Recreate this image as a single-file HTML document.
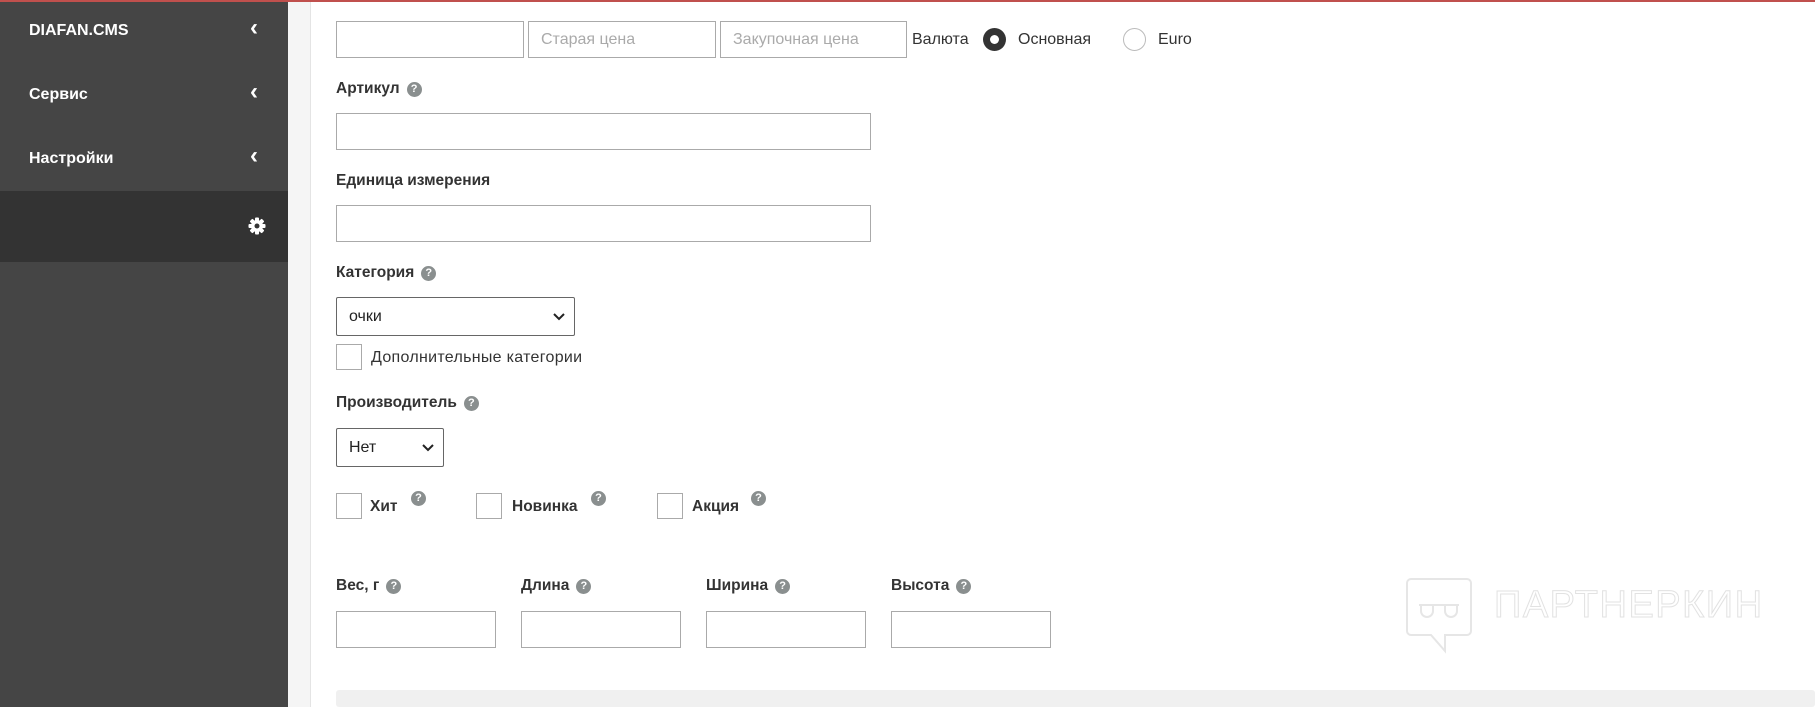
<!DOCTYPE html>
<html><head><meta charset="utf-8"><style>
*{box-sizing:border-box;margin:0;padding:0}
body{width:1815px;height:707px;overflow:hidden;background:#fff;font-family:"Liberation Sans",sans-serif;position:relative;color:#333}
.a{position:absolute}
.side{left:0;top:0;width:288px;height:707px;background:#454545}
.nav{color:#fff;font-weight:bold;font-size:16px;left:29px}
.chev{color:#fff;font-size:24px;left:250px;font-weight:bold}
.strip{left:288px;top:0;width:23px;height:707px;background:#f5f5f5;border-right:1px solid #e4e4e4}
.top{left:0;top:0;width:1815px;height:2px;background:#c0504d}
.in{border:1px solid #aaa;background:#fff;height:37px}
.lbl{font-size:15.5px;color:#333;font-weight:bold}
.q{display:inline-block;width:15px;height:15px;border-radius:50%;background:#8a8f8f;color:#fff;font-size:11px;font-weight:bold;text-align:center;line-height:15px;vertical-align:1px;margin-left:7px}
.ph{color:#aaa;font-size:16px;padding:9px 12px}
.cb{width:26px;height:26px;border:1px solid #aaa;background:#fff}
.sel{border:1px solid #666;border-radius:2px;background:#fff;font-size:16px;padding:10px 12px;color:#222}
.sel svg{position:absolute;right:9px;top:15px}
</style></head><body>
<div class="a side"></div>
<div class="a" style="left:0;top:191px;width:288px;height:71px;background:#333"></div>
<div class="a nav" style="top:22px">DIAFAN.CMS</div><div class="a chev" style="top:14px">‹</div>
<div class="a nav" style="top:86px">Сервис</div><div class="a chev" style="top:78px">‹</div>
<div class="a nav" style="top:150px">Настройки</div><div class="a chev" style="top:142px">‹</div>
<svg class="a" style="left:248px;top:217px" width="18" height="18" viewBox="0 0 18 18"><g fill="#fff"><circle cx="9" cy="9" r="6"/><rect x="7" y="0.5" width="4" height="17" rx="1"/><rect x="0.5" y="7" width="17" height="4" rx="1"/><rect x="7" y="0.5" width="4" height="17" rx="1" transform="rotate(45 9 9)"/><rect x="7" y="0.5" width="4" height="17" rx="1" transform="rotate(-45 9 9)"/></g><circle cx="9" cy="9" r="2.5" fill="#333"/></svg>
<div class="a strip"></div>
<div class="a top"></div>

<div class="a in" style="left:336px;top:21px;width:188px"></div>
<div class="a in ph" style="left:528px;top:21px;width:188px">Старая цена</div>
<div class="a in ph" style="left:720px;top:21px;width:187px">Закупочная цена</div>
<div class="a" style="left:912px;top:31px;font-size:16px">Валюта</div>
<div class="a" style="left:983px;top:28px;width:23px;height:23px;border-radius:50%;background:#333"><div style="margin:7px;width:9px;height:9px;border-radius:50%;background:#fff"></div></div>
<div class="a" style="left:1018px;top:31px;font-size:16px">Основная</div>
<div class="a" style="left:1123px;top:28px;width:23px;height:23px;border-radius:50%;border:1px solid #bbb"></div>
<div class="a" style="left:1158px;top:31px;font-size:16px">Euro</div>

<div class="a lbl" style="left:336px;top:80px">Артикул<span class="q">?</span></div>
<div class="a in" style="left:336px;top:113px;width:535px"></div>
<div class="a lbl" style="left:336px;top:172px">Единица измерения</div>
<div class="a in" style="left:336px;top:205px;width:535px"></div>
<div class="a lbl" style="left:336px;top:264px">Категория<span class="q">?</span></div>
<div class="a sel" style="left:336px;top:297px;width:239px;height:39px">очки<svg width="12" height="8"><path d="M1 1l5 5 5-5" stroke="#222" stroke-width="2" fill="none"/></svg></div>
<div class="a cb" style="left:336px;top:344px"></div>
<div class="a" style="left:371px;top:349px;font-size:16px;letter-spacing:0.3px">Дополнительные категории</div>
<div class="a lbl" style="left:336px;top:394px">Производитель<span class="q">?</span></div>
<div class="a sel" style="left:336px;top:428px;width:108px;height:39px">Нет<svg width="12" height="8"><path d="M1 1l5 5 5-5" stroke="#222" stroke-width="2" fill="none"/></svg></div>

<div class="a cb" style="left:336px;top:493px"></div><div class="a lbl" style="left:370px;top:498px">Хит</div><span class="a q" style="left:411px;top:491px;margin:0">?</span>
<div class="a cb" style="left:476px;top:493px"></div><div class="a lbl" style="left:512px;top:498px">Новинка</div><span class="a q" style="left:591px;top:491px;margin:0">?</span>
<div class="a cb" style="left:657px;top:493px"></div><div class="a lbl" style="left:692px;top:498px">Акция</div><span class="a q" style="left:751px;top:491px;margin:0">?</span>

<div class="a lbl" style="left:336px;top:577px">Вес, г<span class="q">?</span></div>
<div class="a lbl" style="left:521px;top:577px">Длина<span class="q">?</span></div>
<div class="a lbl" style="left:706px;top:577px">Ширина<span class="q">?</span></div>
<div class="a lbl" style="left:891px;top:577px">Высота<span class="q">?</span></div>
<div class="a in" style="left:336px;top:611px;width:160px"></div>
<div class="a in" style="left:521px;top:611px;width:160px"></div>
<div class="a in" style="left:706px;top:611px;width:160px"></div>
<div class="a in" style="left:891px;top:611px;width:160px"></div>

<div class="a" style="left:336px;top:690px;width:1479px;height:17px;background:#f0f0f0;border-radius:3px"></div>
<svg class="a" style="left:1405px;top:577px" width="70" height="78" fill="none" stroke="#e6e6e6" stroke-width="2"><path d="M6 2h56a4 4 0 0 1 4 4v48a4 4 0 0 1-4 4H40v16L26 58H6a4 4 0 0 1-4-4V6a4 4 0 0 1 4-4z"/><path d="M14 28h40M16 28v6a4 4 0 0 0 12 0v-6M40 28v6a4 4 0 0 0 12 0v-6"/></svg>
<div class="a" style="left:1494px;top:584px;font-size:38px;color:#fff;-webkit-text-stroke:1px #e2e2e2;letter-spacing:1.5px">ПАРТНЕРКИН</div>
</body></html>
